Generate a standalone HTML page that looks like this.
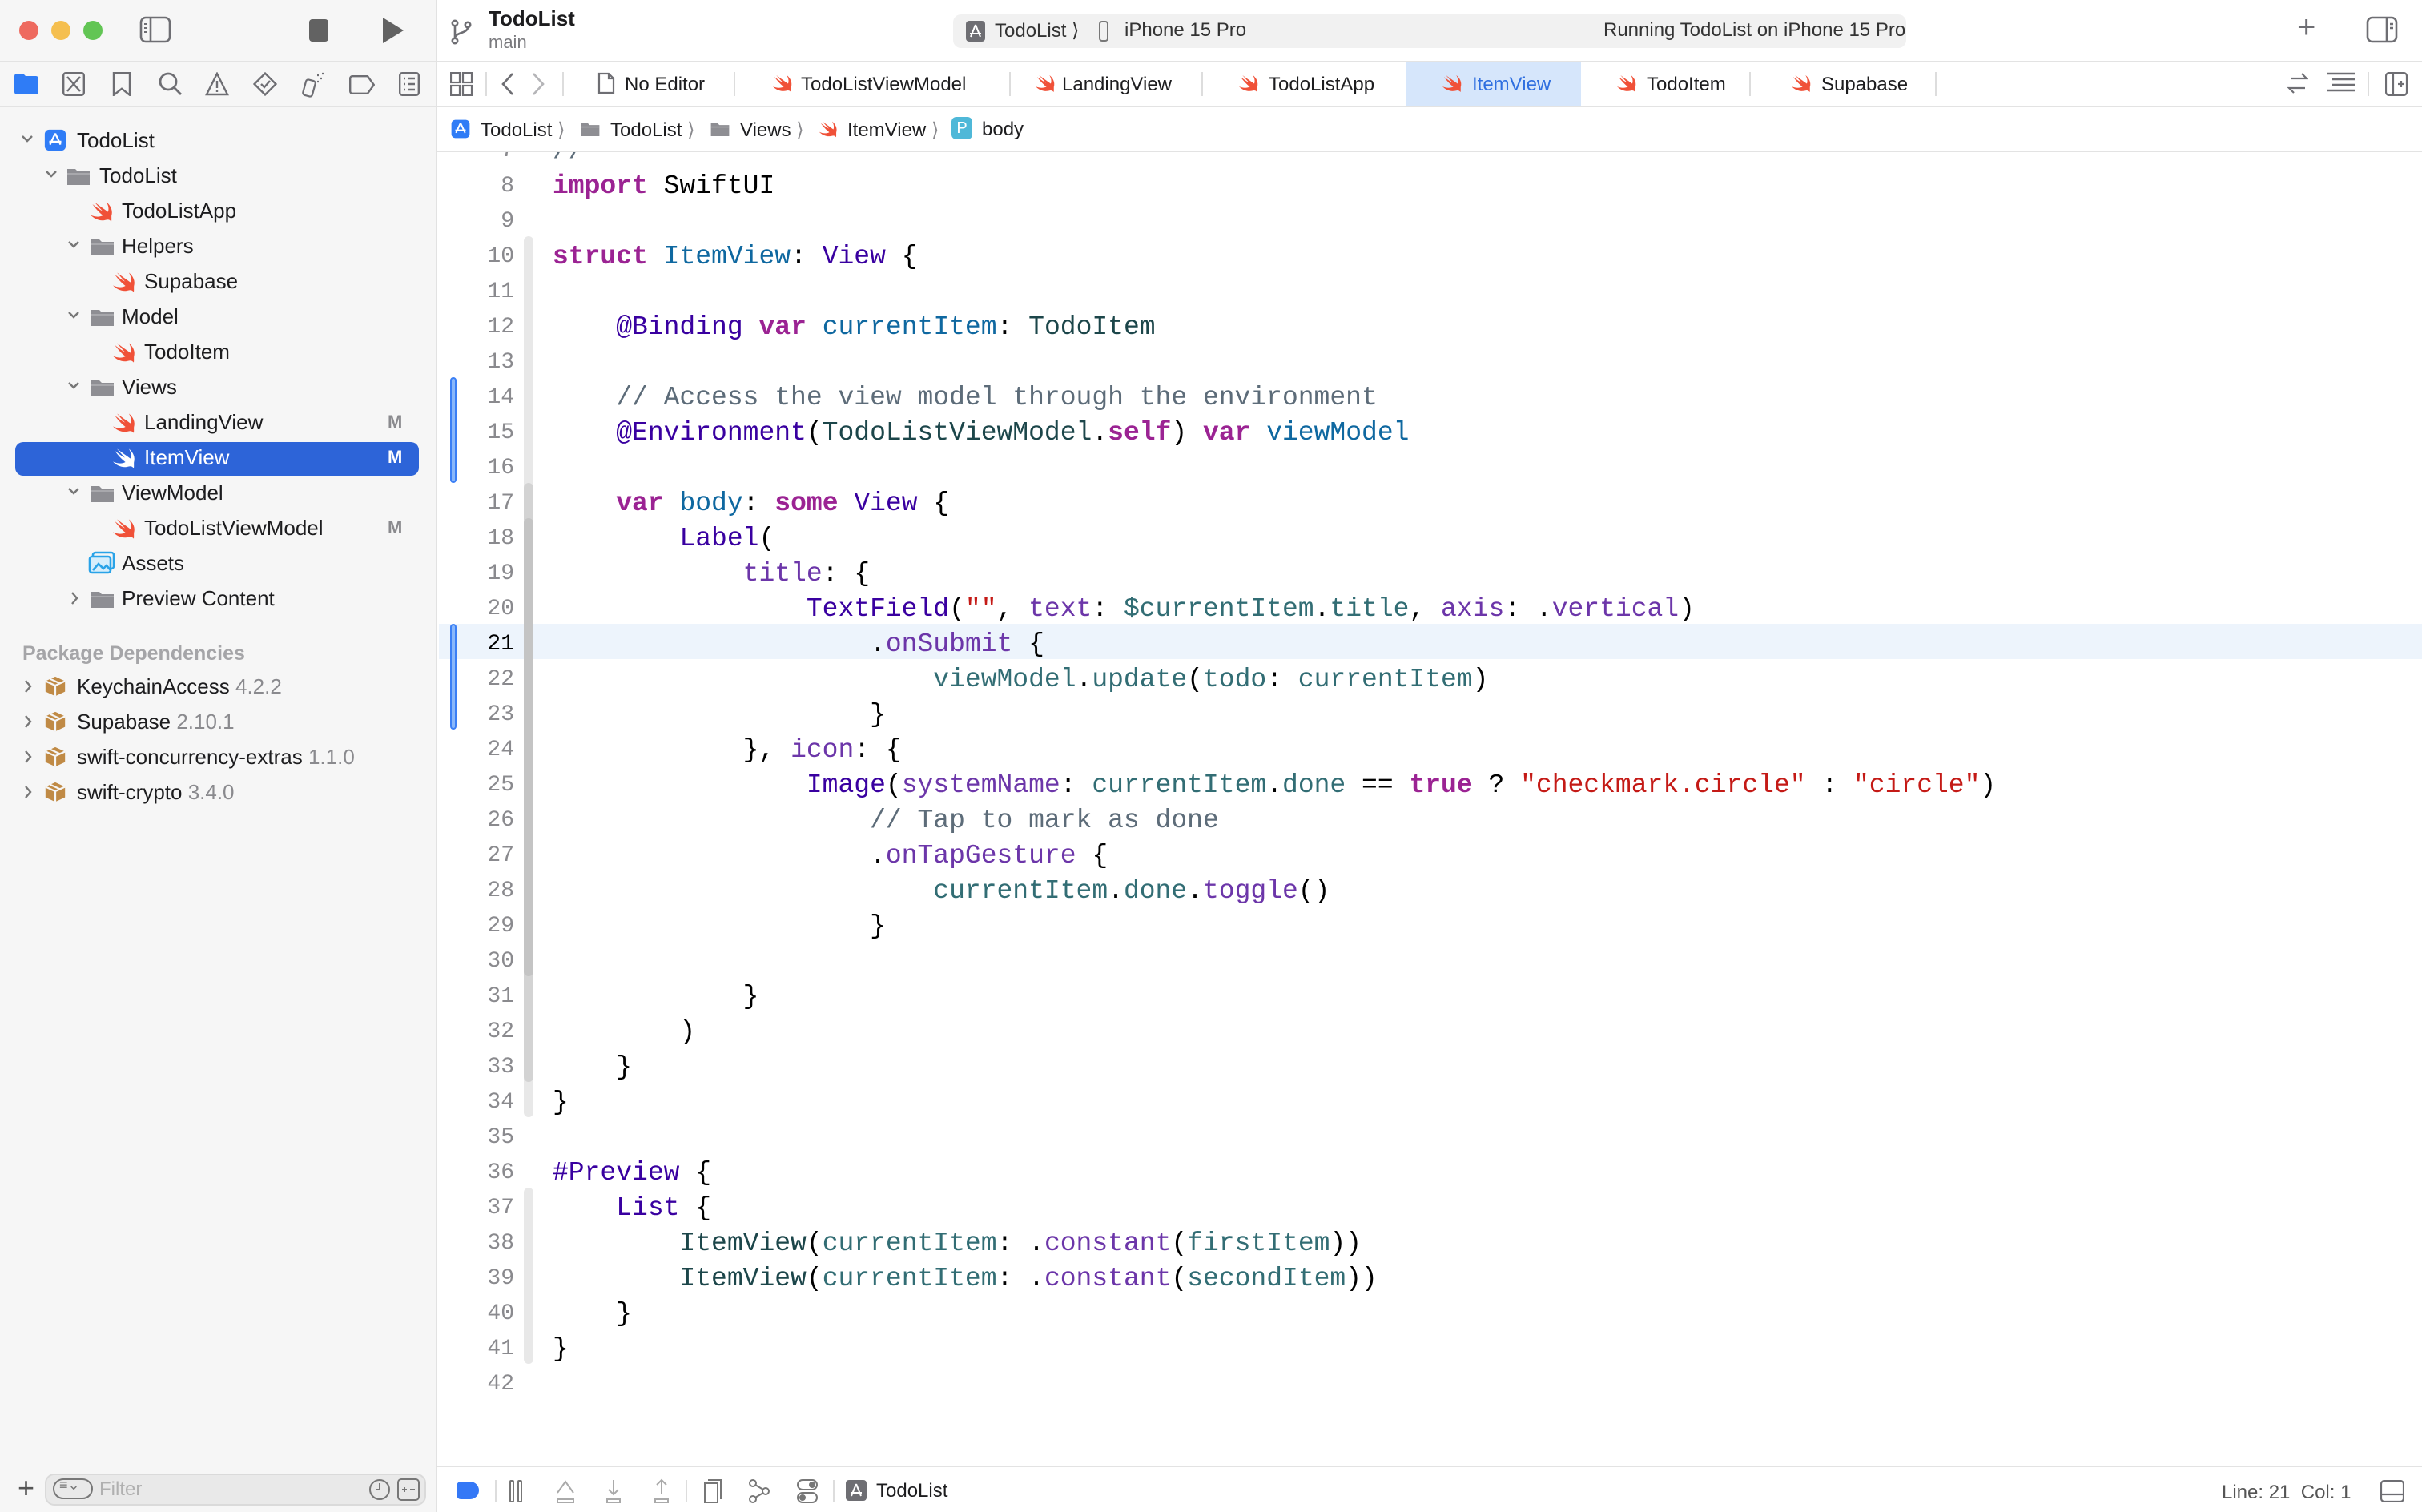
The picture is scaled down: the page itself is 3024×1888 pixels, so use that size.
<!DOCTYPE html>
<html><head><meta charset="utf-8">
<style>
*{margin:0;padding:0;box-sizing:border-box}
html,body{width:3024px;height:1888px;overflow:hidden;background:#fff}
#w{zoom:2;width:1512px;height:944px;position:relative;overflow:hidden;font-family:"Liberation Sans",sans-serif;color:#1d1d1f;background:#fff}
.a{position:absolute;white-space:nowrap}
pre.a{white-space:pre}
.sb{left:0;top:0;width:273px;height:944px;background:#f6f6f6;border-right:1px solid #e2e2e2}
.hl{height:1px;background:#e3e3e3}
.t12{font-size:12px}
.t13{font-size:13px}
.code{font-family:"Liberation Mono",monospace;font-size:16.5px;line-height:22px;color:#000}
.k{color:#9b2393;font-weight:bold}
.ty{color:#3900a0}
.pt{color:#1c464a}
.dc{color:#0f68a0}
.pp{color:#326d74}
.of{color:#6c36a9}
.cm{color:#5d6c79}
.st{color:#c41a16}
.ln{font-family:"Liberation Mono",monospace;font-size:14px;line-height:22px;color:#8a8a8e;text-align:right;width:40px}
.gray{color:#8a8a8e}
</style></head><body><div id="w">

<svg width="0" height="0" style="position:absolute">
<defs>
<symbol id="sw" viewBox="0 0 16 16"><path d="M13.6 10.6c.9-2.8-.3-6.2-3.2-8.4 1.3 2 1.7 4.3 1 6.1C9 6.6 5.6 4.2 3 2.2c1.8 2.1 3.5 4 5 5.6C6 6.7 3.6 5 1.7 3.5 3.6 6.2 6 8.8 8.3 10.5c-2.3 1.2-5.2 1-7.8-.3 2 2.2 5 3.6 8 3.4 1.5-.1 2.7-.8 3.7-.3.5.2.9.6 1.3 1 .2-1.3 0-2.6.1-3.7z" fill="#f05138"/></symbol>
<symbol id="fd" viewBox="0 0 16 16"><path d="M1 3.5h5l1.5 1.5H15v8.5H1z" fill="#8e8e93"/><rect x="1" y="6" width="14" height="1" fill="#a8a8ac"/></symbol>
<symbol id="pk" viewBox="0 0 16 16"><path d="M8 1.5l6.5 3v7L8 14.5l-6.5-3v-7z" fill="#c08a45"/><path d="M1.5 4.5L8 7.5l6.5-3M8 7.5v7" stroke="#f6f6f6" stroke-width="1.2" fill="none"/><path d="M4.5 3l6.5 3" stroke="#f6f6f6" stroke-width="1.2"/></symbol>
<symbol id="ap" viewBox="0 0 16 16"><rect x="1" y="1" width="14" height="14" rx="3" fill="#2f7cf6"/><path d="M8 3.5L4.5 11M8 3.5l3.5 7.5M4 9h8" stroke="#fff" stroke-width="1.2" fill="none"/></symbol>
</defs></svg>

<!-- sidebar -->
<div class="a sb"></div>
<div class="a" style="left:12px;top:13px;width:12px;height:12px;border-radius:50%;background:#ee6a5f"></div>
<div class="a" style="left:32px;top:13px;width:12px;height:12px;border-radius:50%;background:#f5bf4f"></div>
<div class="a" style="left:52px;top:13px;width:12px;height:12px;border-radius:50%;background:#62c554"></div>
<svg class="a" style="left:87px;top:10px" width="20" height="17" viewBox="0 0 20 17"><rect x="1" y="1" width="18" height="15" rx="3" fill="none" stroke="#6e6e73" stroke-width="1.3"/><path d="M7 1v15" stroke="#6e6e73" stroke-width="1.3"/><path d="M3 5h2M3 7.5h2M3 10h2" stroke="#6e6e73"/></svg>
<div class="a" style="left:193px;top:12px;width:12px;height:14px;border-radius:2px;background:#626262"></div>
<svg class="a" style="left:238px;top:11px" width="14" height="16"><path d="M1 0l13 8-13 8z" fill="#626262"/></svg>
<div class="a hl" style="left:0;top:38px;width:273px"></div>
<!-- nav icons -->
<svg class="a" style="left:9px;top:46px" width="15" height="13"><path d="M0 1.5a1.5 1.5 0 011.5-1.5h4l1.5 1.5H13.5A1.5 1.5 0 0115 3v8.5a1.5 1.5 0 01-1.5 1.5h-12A1.5 1.5 0 010 11.5z" fill="#2f7cf6"/></svg>
<svg class="a" style="left:39px;top:45px" width="14" height="15" fill="none" stroke="#6e6e73" stroke-width="1.2"><rect x=".6" y=".6" width="12.8" height="13.8" rx="1.5"/><path d="M3 3l8 9M11 3l-8 9"/></svg>
<svg class="a" style="left:70px;top:45px" width="12" height="15" fill="none" stroke="#6e6e73" stroke-width="1.2"><path d="M1 .6h10v13.8l-5-4-5 4z"/></svg>
<svg class="a" style="left:99px;top:45px" width="15" height="15" fill="none" stroke="#6e6e73" stroke-width="1.4"><circle cx="6" cy="6" r="5"/><path d="M9.7 9.7L14 14"/></svg>
<svg class="a" style="left:128px;top:45px" width="15" height="15" fill="none" stroke="#6e6e73" stroke-width="1.2"><path d="M7.5 1L14 14H1z"/><path d="M7.5 5.5v4.5M7.5 11.5v1"/></svg>
<svg class="a" style="left:158px;top:45px" width="15" height="15" fill="none" stroke="#6e6e73" stroke-width="1.2"><path d="M7.5 .8L14.2 7.5 7.5 14.2.8 7.5z"/><path d="M5 7.5l2 2 3.5-4"/></svg>
<svg class="a" style="left:188px;top:44px" width="15" height="17" fill="none" stroke="#6e6e73" stroke-width="1.1"><rect x="2" y="6" width="6" height="10" rx="1.5" transform="rotate(15 5 11)"/><path d="M10 3h1M12 5h1M10 7h1M13 2h1"/></svg>
<svg class="a" style="left:218px;top:47px" width="16" height="12" fill="none" stroke="#6e6e73" stroke-width="1.2"><path d="M2 .6h9.5l3.9 5.4-3.9 5.4H2A1.4 1.4 0 01.6 10V2A1.4 1.4 0 012 .6z"/></svg>
<svg class="a" style="left:249px;top:45px" width="13" height="15" fill="none" stroke="#6e6e73" stroke-width="1.2"><rect x=".6" y=".6" width="11.8" height="13.8" rx="1.5"/><path d="M3 4h1M6 4h4M3 7.5h1M6 7.5h4M3 11h1M6 11h4"/></svg>
<div class="a hl" style="left:0;top:66px;width:273px"></div>

<!-- tree -->
<div class="a" style="left:9.6px;top:276px;width:252px;height:21px;border-radius:5px;background:#2d64d8"></div>
<div class="a t13" style="left:0;top:0;width:273px">
<svg class="a" style="left:13px;top:84px" width="8" height="6" fill="none" stroke="#777" stroke-width="1.2"><path d="M1 1l3 3 3-3"/></svg>
<svg class="a" style="left:27px;top:80px" width="15" height="15"><use href="#ap"/></svg>
<span class="a" style="left:48px;top:80px">TodoList</span>

<svg class="a" style="left:28px;top:106px" width="8" height="6" fill="none" stroke="#777" stroke-width="1.2"><path d="M1 1l3 3 3-3"/></svg>
<svg class="a" style="left:41px;top:102px" width="16" height="16"><use href="#fd"/></svg>
<span class="a" style="left:62px;top:102px">TodoList</span>

<svg class="a" style="left:56px;top:124px" width="16" height="16"><use href="#sw"/></svg>
<span class="a" style="left:76px;top:124px">TodoListApp</span>

<svg class="a" style="left:42px;top:150px" width="8" height="6" fill="none" stroke="#777" stroke-width="1.2"><path d="M1 1l3 3 3-3"/></svg>
<svg class="a" style="left:56px;top:146px" width="16" height="16"><use href="#fd"/></svg>
<span class="a" style="left:76px;top:146px">Helpers</span>

<svg class="a" style="left:70px;top:168px" width="16" height="16"><use href="#sw"/></svg>
<span class="a" style="left:90px;top:168px">Supabase</span>

<svg class="a" style="left:42px;top:194px" width="8" height="6" fill="none" stroke="#777" stroke-width="1.2"><path d="M1 1l3 3 3-3"/></svg>
<svg class="a" style="left:56px;top:190px" width="16" height="16"><use href="#fd"/></svg>
<span class="a" style="left:76px;top:190px">Model</span>

<svg class="a" style="left:70px;top:212px" width="16" height="16"><use href="#sw"/></svg>
<span class="a" style="left:90px;top:212px">TodoItem</span>

<svg class="a" style="left:42px;top:238px" width="8" height="6" fill="none" stroke="#777" stroke-width="1.2"><path d="M1 1l3 3 3-3"/></svg>
<svg class="a" style="left:56px;top:234px" width="16" height="16"><use href="#fd"/></svg>
<span class="a" style="left:76px;top:234px">Views</span>

<svg class="a" style="left:70px;top:256px" width="16" height="16"><use href="#sw"/></svg>
<span class="a" style="left:90px;top:256px">LandingView</span>
<span class="a gray" style="left:242px;top:257px;font-size:11px;font-weight:bold">M</span>

<svg class="a" style="left:70px;top:278px" width="16" height="16"><path d="M13.6 10.6c.9-2.8-.3-6.2-3.2-8.4 1.3 2 1.7 4.3 1 6.1C9 6.6 5.6 4.2 3 2.2c1.8 2.1 3.5 4 5 5.6C6 6.7 3.6 5 1.7 3.5 3.6 6.2 6 8.8 8.3 10.5c-2.3 1.2-5.2 1-7.8-.3 2 2.2 5 3.6 8 3.4 1.5-.1 2.7-.8 3.7-.3.5.2.9.6 1.3 1 .2-1.3 0-2.6.1-3.7z" fill="#fff"/></svg>
<span class="a" style="left:90px;top:278px;color:#fff">ItemView</span>
<span class="a" style="left:242px;top:279px;font-size:11px;font-weight:bold;color:#fff">M</span>

<svg class="a" style="left:42px;top:304px" width="8" height="6" fill="none" stroke="#777" stroke-width="1.2"><path d="M1 1l3 3 3-3"/></svg>
<svg class="a" style="left:56px;top:300px" width="16" height="16"><use href="#fd"/></svg>
<span class="a" style="left:76px;top:300px">ViewModel</span>

<svg class="a" style="left:70px;top:322px" width="16" height="16"><use href="#sw"/></svg>
<span class="a" style="left:90px;top:322px">TodoListViewModel</span>
<span class="a gray" style="left:242px;top:323px;font-size:11px;font-weight:bold">M</span>

<svg class="a" style="left:55px;top:344px" width="17" height="15" fill="none" stroke="#2aa3e8" stroke-width="1.3"><rect x="3" y="1" width="13" height="10" rx="1.5"/><rect x="1" y="3.5" width="13" height="10" rx="1.5" fill="#d6eefc"/><path d="M3 12l3.5-4 3 3 2-2 2.5 3" /></svg>
<span class="a" style="left:76px;top:344px">Assets</span>

<svg class="a" style="left:44px;top:369px" width="6" height="9" fill="none" stroke="#777" stroke-width="1.2"><path d="M1 1l3 3.5L1 8"/></svg>
<svg class="a" style="left:56px;top:366px" width="16" height="16"><use href="#fd"/></svg>
<span class="a" style="left:76px;top:366px">Preview Content</span>

<span class="a" style="left:14px;top:401px;color:#a5a5a8;font-weight:bold;font-size:12.5px">Package Dependencies</span>

<svg class="a" style="left:15px;top:424px" width="6" height="9" fill="none" stroke="#777" stroke-width="1.2"><path d="M1 1l3 3.5L1 8"/></svg>
<svg class="a" style="left:27px;top:421px" width="15" height="15"><use href="#pk"/></svg>
<span class="a" style="left:48px;top:421px">KeychainAccess <span class="gray">4.2.2</span></span>
<svg class="a" style="left:15px;top:446px" width="6" height="9" fill="none" stroke="#777" stroke-width="1.2"><path d="M1 1l3 3.5L1 8"/></svg>
<svg class="a" style="left:27px;top:443px" width="15" height="15"><use href="#pk"/></svg>
<span class="a" style="left:48px;top:443px">Supabase <span class="gray">2.10.1</span></span>
<svg class="a" style="left:15px;top:468px" width="6" height="9" fill="none" stroke="#777" stroke-width="1.2"><path d="M1 1l3 3.5L1 8"/></svg>
<svg class="a" style="left:27px;top:465px" width="15" height="15"><use href="#pk"/></svg>
<span class="a" style="left:48px;top:465px">swift-concurrency-extras <span class="gray">1.1.0</span></span>
<svg class="a" style="left:15px;top:490px" width="6" height="9" fill="none" stroke="#777" stroke-width="1.2"><path d="M1 1l3 3.5L1 8"/></svg>
<svg class="a" style="left:27px;top:487px" width="15" height="15"><use href="#pk"/></svg>
<span class="a" style="left:48px;top:487px">swift-crypto <span class="gray">3.4.0</span></span>
</div>

<!-- filter -->
<span class="a" style="left:11px;top:919px;font-size:18px;color:#555;line-height:20px">+</span>
<div class="a" style="left:28px;top:920px;width:238px;height:20px;border-radius:6px;background:#e9e9e9;border:1px solid #dadada"></div>
<div class="a" style="left:33px;top:923px;width:25px;height:13px;border-radius:7px;border:1px solid #777"></div>
<span class="a" style="left:37px;top:922px;font-size:9px;color:#777">&#8801;&#8964;</span>
<span class="a" style="left:62px;top:923px;font-size:12px;color:#b0b0b0">Filter</span>
<svg class="a" style="left:230px;top:923px" width="14" height="14" fill="none" stroke="#777"><circle cx="7" cy="7" r="6"/><path d="M7 3v4H5"/></svg>
<svg class="a" style="left:248px;top:923px" width="14" height="14" fill="none" stroke="#777"><rect x=".5" y=".5" width="13" height="13" rx="2"/><path d="M3 7h3M4.5 5.5v3M8 7h3"/></svg>

<!-- top toolbar right -->
<svg class="a" style="left:281px;top:12px" width="14" height="16" fill="none" stroke="#6e6e73" stroke-width="1.3"><circle cx="3" cy="2.5" r="1.6"/><circle cx="3" cy="13.5" r="1.6"/><circle cx="11" cy="3.5" r="1.6"/><path d="M3 4v8M11 5c0 4-8 3-8 7"/></svg>
<span class="a" style="left:305px;top:4px;font-size:13px;font-weight:bold">TodoList</span>
<span class="a" style="left:305px;top:20px;font-size:11px;color:#7a7a7e">main</span>
<div class="a" style="left:595px;top:9px;width:595px;height:21px;border-radius:5px;background:#f1f1f1"></div>
<svg class="a" style="left:603px;top:13px" width="12" height="13"><rect width="12" height="13" rx="2" fill="#6e6e73"/><path d="M6 2.5L3 10M6 2.5l3 7.5M2.5 8h7" stroke="#fff" stroke-width="1" fill="none"/></svg>
<span class="a t12" style="left:621px;top:12px;color:#333">TodoList &#10217;</span>
<div class="a" style="left:686px;top:13px;width:6px;height:13px;border-radius:2px;border:1px solid #777"></div>
<span class="a t12" style="left:702px;top:12px;color:#333">iPhone 15 Pro</span>
<span class="a t12" style="left:1001px;top:12px;color:#333">Running TodoList on iPhone 15 Pro</span>
<span class="a" style="left:1434px;top:6px;font-size:20px;color:#6e6e73;font-weight:300">+</span>
<svg class="a" style="left:1477px;top:10px" width="20" height="17" fill="none" stroke="#6e6e73" stroke-width="1.3"><rect x="1" y="1" width="18" height="15" rx="3"/><path d="M13 1v15"/><path d="M15 5h2M15 7.5h2" /></svg>
<div class="a hl" style="left:273px;top:38px;width:1239px"></div>

<!-- tab bar -->
<div class="a" style="left:878px;top:39px;width:109px;height:27px;background:#d6e6fb"></div>
<svg class="a" style="left:281px;top:45px" width="14" height="15" fill="none" stroke="#6e6e73" stroke-width="1.1"><rect x=".5" y=".5" width="5.5" height="6" /><rect x="8" y=".5" width="5.5" height="6"/><rect x=".5" y="8.5" width="5.5" height="6"/><rect x="8" y="8.5" width="5.5" height="6"/></svg>
<div class="a" style="left:303px;top:45px;width:1px;height:15px;background:#ddd"></div>
<svg class="a" style="left:312px;top:45px" width="10" height="15" fill="none" stroke="#6e6e73" stroke-width="1.3"><path d="M8 1L2 7.5 8 14"/></svg>
<svg class="a" style="left:331px;top:45px" width="10" height="15" fill="none" stroke="#b5b5b8" stroke-width="1.3"><path d="M2 1l6 6.5L2 14"/></svg>
<div class="a" style="left:351px;top:45px;width:1px;height:15px;background:#ddd"></div>
<svg class="a" style="left:373px;top:45px" width="11" height="14" fill="none" stroke="#6e6e73" stroke-width="1.1"><path d="M1 1h6l3 3v9H1zM7 1v3h3"/></svg>
<span class="a t12" style="left:390px;top:46px">No Editor</span>
<div class="a" style="left:458px;top:45px;width:1px;height:15px;background:#ddd"></div>
<svg class="a" style="left:482px;top:45px" width="14" height="14"><use href="#sw"/></svg>
<span class="a t12" style="left:500px;top:46px">TodoListViewModel</span>
<div class="a" style="left:630px;top:45px;width:1px;height:15px;background:#ddd"></div>
<svg class="a" style="left:646px;top:45px" width="14" height="14"><use href="#sw"/></svg>
<span class="a t12" style="left:663px;top:46px">LandingView</span>
<div class="a" style="left:750px;top:45px;width:1px;height:15px;background:#ddd"></div>
<svg class="a" style="left:773px;top:45px" width="14" height="14"><use href="#sw"/></svg>
<span class="a t12" style="left:792px;top:46px">TodoListApp</span>
<svg class="a" style="left:900px;top:45px" width="14" height="14"><use href="#sw"/></svg>
<span class="a t12" style="left:919px;top:46px;color:#2f6fe0">ItemView</span>
<svg class="a" style="left:1009px;top:45px" width="14" height="14"><use href="#sw"/></svg>
<span class="a t12" style="left:1028px;top:46px">TodoItem</span>
<div class="a" style="left:1092px;top:45px;width:1px;height:15px;background:#ddd"></div>
<svg class="a" style="left:1118px;top:45px" width="14" height="14"><use href="#sw"/></svg>
<span class="a t12" style="left:1137px;top:46px">Supabase</span>
<div class="a" style="left:1208px;top:45px;width:1px;height:15px;background:#ddd"></div>
<svg class="a" style="left:1428px;top:45px" width="13" height="14" fill="none" stroke="#6e6e73" stroke-width="1.1"><path d="M2 4h10l-3-3M11 10H1l3 3"/></svg>
<svg class="a" style="left:1453px;top:45px" width="17" height="14" stroke="#6e6e73" stroke-width="1.2"><path d="M0 1h17M3 4.5h14M3 8h14M0 11.5h17"/></svg>
<div class="a" style="left:1478px;top:45px;width:1px;height:15px;background:#ddd"></div>
<svg class="a" style="left:1489px;top:45px" width="14" height="15" fill="none" stroke="#6e6e73" stroke-width="1.1"><rect x=".5" y=".5" width="13" height="14" rx="2"/><path d="M5 .5v14M8 7.5h4M10 5.5v4"/></svg>
<div class="a hl" style="left:273px;top:66px;width:1239px"></div>

<!-- breadcrumb -->
<div class="a t12" style="left:0;top:0">
<svg class="a" style="left:281px;top:74px" width="13" height="13"><use href="#ap"/></svg>
<span class="a" style="left:300px;top:74px">TodoList <span class="gray">&#10217;</span></span>
<svg class="a" style="left:362px;top:74px" width="13" height="13"><use href="#fd"/></svg>
<span class="a" style="left:381px;top:74px">TodoList <span class="gray">&#10217;</span></span>
<svg class="a" style="left:443px;top:74px" width="13" height="13"><use href="#fd"/></svg>
<span class="a" style="left:462px;top:74px">Views <span class="gray">&#10217;</span></span>
<svg class="a" style="left:511px;top:74px" width="13" height="13"><use href="#sw"/></svg>
<span class="a" style="left:529px;top:74px">ItemView <span class="gray">&#10217;</span></span>
<div class="a" style="left:594px;top:73px;width:13px;height:14px;border-radius:3px;background:#4fb8d8;color:#fff;font-size:10px;text-align:center;line-height:14px">P</div>
<span class="a" style="left:613px;top:74px">body</span>
</div>
<div class="a hl" style="left:273px;top:94px;width:1239px"></div>

<!-- editor -->
<div class="a" style="left:274px;top:95px;width:1238px;height:820px;overflow:hidden">
  <div class="a" style="left:0;top:294.7px;width:1238px;height:22px;background:#edf4fc"></div>
  <div class="a" style="left:7px;top:140.7px;width:4px;height:66px;border-radius:2px;background:#8ab8fa;border:1px solid #3b7ff5"></div>
  <div class="a" style="left:7px;top:294.7px;width:4px;height:66px;border-radius:2px;background:#8ab8fa;border:1px solid #3b7ff5"></div>
  <div class="a" style="left:53px;top:52.7px;width:6px;height:550px;background:#e8e8e8;border-radius:3px"></div>
  <div class="a" style="left:53px;top:206.7px;width:6px;height:374px;background:#d3d3d3;border-radius:3px"></div>
  <div class="a" style="left:53px;top:228.7px;width:6px;height:286px;background:#c4c4c4;border-radius:3px"></div>
  <div class="a" style="left:53px;top:646.7px;width:6px;height:110px;background:#e8e8e8;border-radius:3px"></div>
  <pre class="a ln" style="left:7px;top:-11.3px">7
8
9
10
11
12
13
14
15
16
17
18
19
20
<span style="color:#000">21</span>
22
23
24
25
26
27
28
29
30
31
32
33
34
35
36
37
38
39
40
41
42</pre>
<pre class="a code" style="left:71px;top:-11.3px"><span class="cm">//</span>
<span class="k">import</span> SwiftUI

<span class="k">struct</span> <span class="dc">ItemView</span>: <span class="ty">View</span> {

    <span class="ty">@Binding</span> <span class="k">var</span> <span class="dc">currentItem</span>: <span class="pt">TodoItem</span>

    <span class="cm">// Access the view model through the environment</span>
    <span class="ty">@Environment</span>(<span class="pt">TodoListViewModel</span>.<span class="k">self</span>) <span class="k">var</span> <span class="dc">viewModel</span>

    <span class="k">var</span> <span class="dc">body</span>: <span class="k">some</span> <span class="ty">View</span> {
        <span class="ty">Label</span>(
            <span class="of">title</span>: {
                <span class="ty">TextField</span>(<span class="st">""</span>, <span class="of">text</span>: <span class="pp">$currentItem</span>.<span class="pp">title</span>, <span class="of">axis</span>: .<span class="of">vertical</span>)
                    .<span class="of">onSubmit</span> {
                        <span class="pp">viewModel</span>.<span class="pp">update</span>(<span class="pp">todo</span>: <span class="pp">currentItem</span>)
                    }
            }, <span class="of">icon</span>: {
                <span class="ty">Image</span>(<span class="of">systemName</span>: <span class="pp">currentItem</span>.<span class="pp">done</span> == <span class="k">true</span> ? <span class="st">"checkmark.circle"</span> : <span class="st">"circle"</span>)
                    <span class="cm">// Tap to mark as done</span>
                    .<span class="of">onTapGesture</span> {
                        <span class="pp">currentItem</span>.<span class="pp">done</span>.<span class="of">toggle</span>()
                    }

            }
        )
    }
}

<span class="ty">#Preview</span> {
    <span class="ty">List</span> {
        <span class="pt">ItemView</span>(<span class="pp">currentItem</span>: .<span class="of">constant</span>(<span class="pp">firstItem</span>))
        <span class="pt">ItemView</span>(<span class="pp">currentItem</span>: .<span class="of">constant</span>(<span class="pp">secondItem</span>))
    }
}
</pre>
</div>

<!-- bottom bar -->
<div class="a hl" style="left:273px;top:915px;width:1239px"></div>
<div class="a" style="left:285px;top:925px;width:14px;height:11px;border-radius:3px 6px 6px 3px;background:#3478f6"></div>
<div class="a" style="left:309px;top:924px;width:1px;height:14px;background:#ddd"></div>
<div class="a" style="left:318px;top:924px;width:3px;height:14px;border:1px solid #777;border-radius:1px"></div>
<div class="a" style="left:323px;top:924px;width:3px;height:14px;border:1px solid #777;border-radius:1px"></div>
<svg class="a" style="left:346px;top:923px" width="14" height="16" fill="none" stroke="#aaa"><path d="M2 9l5-7 5 7M2 13h10v2H2z"/></svg>
<svg class="a" style="left:376px;top:923px" width="14" height="16" fill="none" stroke="#aaa"><path d="M7 1v9M4 7l3 3 3-3M3 13h8v2H3z"/></svg>
<svg class="a" style="left:406px;top:923px" width="14" height="16" fill="none" stroke="#aaa"><path d="M7 10V1M4 4l3-3 3 3M3 13h8v2H3z"/></svg>
<div class="a" style="left:428px;top:924px;width:1px;height:14px;background:#ddd"></div>
<svg class="a" style="left:437px;top:923px" width="14" height="16" fill="none" stroke="#777"><path d="M3 3h8v12H3zM5 1h8v12"/></svg>
<svg class="a" style="left:467px;top:923px" width="14" height="16" fill="none" stroke="#777"><circle cx="3" cy="3" r="2"/><circle cx="3" cy="13" r="2"/><circle cx="11" cy="8" r="2"/><path d="M4.5 4l5 3M4.5 12l5-3"/></svg>
<svg class="a" style="left:497px;top:923px" width="14" height="16" fill="none" stroke="#777"><rect x="1" y="1" width="12" height="6" rx="3"/><rect x="1" y="9" width="12" height="6" rx="3"/><circle cx="10" cy="4" r="1.5" fill="#777"/><circle cx="4" cy="12" r="1.5" fill="#777"/></svg>
<div class="a" style="left:520px;top:924px;width:1px;height:14px;background:#ddd"></div>
<svg class="a" style="left:528px;top:924px" width="13" height="13"><rect width="13" height="13" rx="2" fill="#6e6e73"/><path d="M6.5 2.5L3.5 10M6.5 2.5l3 7.5M3 8h7" stroke="#fff" stroke-width="1" fill="none"/></svg>
<span class="a t12" style="left:547px;top:924px">TodoList</span>
<span class="a t12" style="left:1387px;top:925px;color:#555">Line: 21&nbsp; Col: 1</span>
<svg class="a" style="left:1486px;top:924px" width="15" height="14" fill="none" stroke="#6e6e73" stroke-width="1.1"><rect x=".5" y=".5" width="14" height="13" rx="2"/><path d="M.5 9h14"/></svg>

</div></body></html>
